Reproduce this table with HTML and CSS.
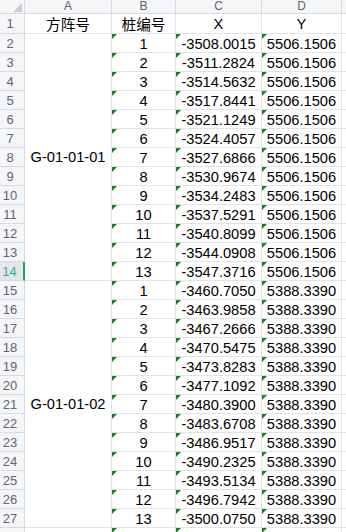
FILE: index.html
```html
<!DOCTYPE html>
<html lang="zh">
<head>
<meta charset="utf-8">
<title>Sheet</title>
<link rel="stylesheet" href="styles.css">
</head>
<body>
<div class="sheet">
  <div class="hd corner"><span class="corner-tri"></span></div>
  <div class="hd col">A</div>
  <div class="hd col">B</div>
  <div class="hd col">C</div>
  <div class="hd col">D</div>
  <div class="hd col"></div>

  <div class="rn">1</div><div class="c cjk">方阵号</div><div class="c cjk">桩编号</div><div class="c">X</div><div class="c">Y</div><div class="c e"></div>

  <div class="rn">2</div><div class="c merge">G-01-01-01</div><div class="c t">1</div><div class="c t">-3508.0015</div><div class="c t">5506.1506</div><div class="c e"></div>
  <div class="rn">3</div><div class="c t">2</div><div class="c t">-3511.2824</div><div class="c t">5506.1506</div><div class="c e"></div>
  <div class="rn">4</div><div class="c t">3</div><div class="c t">-3514.5632</div><div class="c t">5506.1506</div><div class="c e"></div>
  <div class="rn">5</div><div class="c t">4</div><div class="c t">-3517.8441</div><div class="c t">5506.1506</div><div class="c e"></div>
  <div class="rn">6</div><div class="c t">5</div><div class="c t">-3521.1249</div><div class="c t">5506.1506</div><div class="c e"></div>
  <div class="rn">7</div><div class="c t">6</div><div class="c t">-3524.4057</div><div class="c t">5506.1506</div><div class="c e"></div>
  <div class="rn">8</div><div class="c t">7</div><div class="c t">-3527.6866</div><div class="c t">5506.1506</div><div class="c e"></div>
  <div class="rn">9</div><div class="c t">8</div><div class="c t">-3530.9674</div><div class="c t">5506.1506</div><div class="c e"></div>
  <div class="rn">10</div><div class="c t">9</div><div class="c t">-3534.2483</div><div class="c t">5506.1506</div><div class="c e"></div>
  <div class="rn">11</div><div class="c t">10</div><div class="c t">-3537.5291</div><div class="c t">5506.1506</div><div class="c e"></div>
  <div class="rn">12</div><div class="c t">11</div><div class="c t">-3540.8099</div><div class="c t">5506.1506</div><div class="c e"></div>
  <div class="rn">13</div><div class="c t">12</div><div class="c t">-3544.0908</div><div class="c t">5506.1506</div><div class="c e"></div>
  <div class="rn sel">14</div><div class="c t">13</div><div class="c t">-3547.3716</div><div class="c t">5506.1506</div><div class="c e"></div>

  <div class="rn">15</div><div class="c merge">G-01-01-02</div><div class="c t">1</div><div class="c t">-3460.7050</div><div class="c t">5388.3390</div><div class="c e"></div>
  <div class="rn">16</div><div class="c t">2</div><div class="c t">-3463.9858</div><div class="c t">5388.3390</div><div class="c e"></div>
  <div class="rn">17</div><div class="c t">3</div><div class="c t">-3467.2666</div><div class="c t">5388.3390</div><div class="c e"></div>
  <div class="rn">18</div><div class="c t">4</div><div class="c t">-3470.5475</div><div class="c t">5388.3390</div><div class="c e"></div>
  <div class="rn">19</div><div class="c t">5</div><div class="c t">-3473.8283</div><div class="c t">5388.3390</div><div class="c e"></div>
  <div class="rn">20</div><div class="c t">6</div><div class="c t">-3477.1092</div><div class="c t">5388.3390</div><div class="c e"></div>
  <div class="rn">21</div><div class="c t">7</div><div class="c t">-3480.3900</div><div class="c t">5388.3390</div><div class="c e"></div>
  <div class="rn">22</div><div class="c t">8</div><div class="c t">-3483.6708</div><div class="c t">5388.3390</div><div class="c e"></div>
  <div class="rn">23</div><div class="c t">9</div><div class="c t">-3486.9517</div><div class="c t">5388.3390</div><div class="c e"></div>
  <div class="rn">24</div><div class="c t">10</div><div class="c t">-3490.2325</div><div class="c t">5388.3390</div><div class="c e"></div>
  <div class="rn">25</div><div class="c t">11</div><div class="c t">-3493.5134</div><div class="c t">5388.3390</div><div class="c e"></div>
  <div class="rn">26</div><div class="c t">12</div><div class="c t">-3496.7942</div><div class="c t">5388.3390</div><div class="c e"></div>
  <div class="rn">27</div><div class="c t">13</div><div class="c t">-3500.0750</div><div class="c t">5388.3390</div><div class="c e"></div>

  <div class="rn"></div><div class="c"></div><div class="c t"></div><div class="c t"></div><div class="c t"></div><div class="c e"></div>
</div>
</body>
</html>
```

FILE: styles.css
```css
html, body {
  margin: 0;
  padding: 0;
  background: #ffffff;
}

body {
  width: 346px;
  height: 532px;
  overflow: hidden;
  font-family: "Liberation Sans", Arial, "Noto Sans CJK SC", sans-serif;
}

.sheet {
  display: grid;
  grid-template-columns: 25px 87px 64px 86px 80px 10px;
  grid-template-rows: 14px 20px repeat(27, 19px);
}

.sheet > div {
  box-sizing: border-box;
  border-right: 1px solid #dfe3ea;
  border-bottom: 1px solid #dfe3ea;
  position: relative;
}

.hd {
  background: #f5f6f8;
  color: #5f6571;
  font-size: 12px;
  line-height: 13px;
  text-align: center;
  border-color: #d6dae1 !important;
}

.corner-tri {
  position: absolute;
  right: 2px;
  bottom: 1px;
  width: 0;
  height: 0;
  border-left: 9px solid transparent;
  border-bottom: 9px solid #c9cbcf;
}

.rn {
  background: #f5f6f8;
  color: #5f6571;
  font-size: 13px;
  line-height: 19px;
  text-align: center;
  padding-right: 4px;
  border-color: #d6dae1 !important;
}

.rn.sel {
  background: #e4e6ea;
  color: #2eb07c;
  border-right: 2px solid #1fa463 !important;
}

.c {
  color: #000000;
  font-size: 14.67px;
  line-height: 20px;
  text-align: center;
  white-space: nowrap;
}

.cjk {
  font-family: "Noto Sans CJK SC", sans-serif;
  font-size: 14.67px;
  line-height: 19px;
}

.merge {
  grid-row: span 13;
  display: flex;
  align-items: center;
  justify-content: center;
}

.t::before {
  content: "";
  position: absolute;
  left: 0;
  top: 0;
  width: 0;
  height: 0;
  border-top: 5px solid #17801f;
  border-right: 5px solid transparent;
}
```
